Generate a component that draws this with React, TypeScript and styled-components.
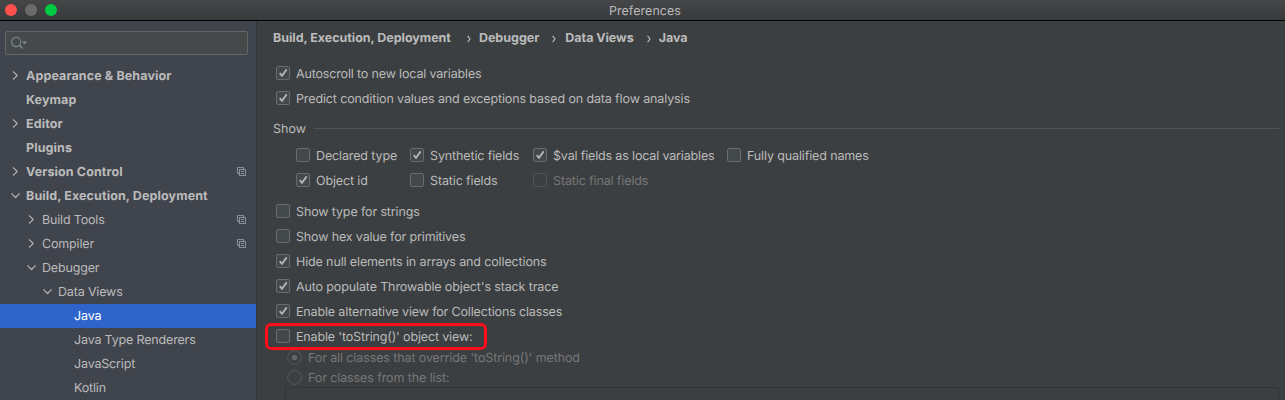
import React from "react";
import styled, { createGlobalStyle, css } from "styled-components";

const GlobalStyle = createGlobalStyle`
  * { box-sizing: border-box; }
  body {
    margin: 0;
    background: #3c3f41;
    overflow: hidden;
  }
`;

const Window = styled.div`
  display: flex;
  flex-direction: column;
  width: 1285px;
  height: 400px;
  overflow: hidden;
  background: #3c3f41;
  color: #bbbbbb;
  font-family: Inter, "Liberation Sans", sans-serif;
  font-size: 12.5px;
  line-height: 16px;
  white-space: nowrap;
  text-rendering: geometricPrecision;
`;

const TitleBar = styled.header`
  display: grid;
  grid-template-columns: 1fr auto 1fr;
  align-items: center;
  flex: none;
  height: 21px;
  padding-left: 5px;
  background: linear-gradient(#454647, #393a3b);
  border-bottom: 1px solid #000;
`;

const Lights = styled.div`
  display: flex;
  gap: 8px;
`;

const Light = styled.i<{ $color: string }>`
  width: 12px;
  height: 12px;
  border-radius: 50%;
  background: ${(p) => p.$color};
`;

const Label = styled.span<{ $track?: number; $bold?: boolean }>`
  padding-top: 2px;
  letter-spacing: ${(p) => p.$track ?? 0}px;
  font-weight: ${(p) => (p.$bold ? 700 : 400)};
`;

const TitleText = styled(Label)`
  padding-top: 3px;
`;

const OptionLabel = styled(Label)`
  padding-top: 4px;
`;

const Body = styled.div`
  display: flex;
  flex: 1;
  min-height: 0;
`;

const Sidebar = styled.nav`
  flex: none;
  width: 257px;
  padding-top: 10px;
  background: #40444d;
  border-right: 1px solid #323435;
`;

const Search = styled.div`
  display: flex;
  align-items: center;
  width: 243px;
  height: 24px;
  margin: 0 0 9px 5px;
  padding-left: 5px;
  background: #45494a;
  border: 1px solid #646564;
  border-radius: 2px;
`;

const TreeRow = styled.div<{ $level: number; $selected?: boolean }>`
  display: flex;
  align-items: center;
  height: 24px;
  padding: 0 9px 0 ${(p) => 9 + p.$level * 16}px;
  ${(p) =>
    p.$selected &&
    css`
      background: #2f65ca;
      color: #fff;
    `}
`;

const ArrowSlot = styled.span`
  display: flex;
  width: 17px;
`;

const Trailing = styled.span`
  display: flex;
  margin-left: auto;
`;

const Main = styled.main`
  flex: 1;
  min-width: 0;
  padding: 9px 6px 0 16px;
`;

const Crumbs = styled.div`
  display: flex;
  align-items: center;
  height: 16px;
  margin-bottom: 15px;
`;

const CrumbArrow = styled.svg<{ $left: number; $right: number }>`
  margin: 1px ${(p) => p.$right}px 0 ${(p) => p.$left}px;
`;

const Options = styled.div`
  display: flex;
  flex-direction: column;
  padding-left: 3px;
`;

const CheckRow = styled.label<{ $disabled?: boolean }>`
  display: flex;
  align-items: center;
  gap: 6px;
  height: 25px;
  padding-bottom: 1px;
  color: ${(p) => (p.$disabled ? "#777777" : "#bbbbbb")};
`;

const Box = styled.span<{ $disabled?: boolean }>`
  display: flex;
  flex: none;
  width: 14px;
  height: 14px;
  border: 1px solid ${(p) => (p.$disabled ? "#545556" : "#6b6b6b")};
  border-radius: 2px;
  background: ${(p) => (p.$disabled ? "#3c3f41" : "#43494a")};
`;

const GroupTitle = styled.div`
  display: flex;
  align-items: center;
  height: 16px;
  margin: 9px 0 7px;
`;

const Rule = styled.span`
  width: 965px;
  height: 1px;
  margin-left: auto;
  background: #515253;
`;

const FieldGrid = styled.div`
  display: grid;
  grid-template-columns: 114px 123px 194px auto;
  padding: 0 0 6px 23px;
`;

const Highlight = styled.div`
  display: flex;
  align-items: center;
  width: 222px;
  height: 27px;
  margin: -1px 0 -2px -11px;
  padding-left: 8px;
  border: 3px solid #fc0d1b;
  border-radius: 6px;
`;

const RadioRow = styled.label`
  display: flex;
  align-items: center;
  gap: 6px;
  height: 20px;
  padding: 0 0 2px 11px;
  color: #777777;
`;

const RadioMark = styled.svg`
  flex: none;
  margin-top: 1px;
`;

const ListBox = styled.div`
  height: 30px;
  margin: -1px 0 0 12px;
  border: 1px solid #323435;
`;

type CheckProps = { text: string; on?: boolean; disabled?: boolean; track?: number };

const Check = ({ text, on, disabled, track = -0.13 }: CheckProps) => (
  <CheckRow $disabled={disabled}>
    <Box $disabled={disabled}>
      {on && (
        <svg width="12" height="12" viewBox="0 0 12 12" fill="none">
          <path d="M2.7 6.2 L5 8.8 L9.7 2.4" stroke="#b4b7b8" strokeWidth="1.8" />
        </svg>
      )}
    </Box>
    <OptionLabel $track={track}>{text}</OptionLabel>
  </CheckRow>
);

const Radio = ({ text, on, track = -0.11 }: { text: string; on?: boolean; track?: number }) => (
  <RadioRow>
    <RadioMark width="15" height="15" viewBox="0 0 15 15">
      <circle cx="7.5" cy="7.5" r="6.9" fill="none" stroke="#575859" />
      {on && <circle cx="7.5" cy="7.5" r="2.6" fill="#666868" />}
    </RadioMark>
    <OptionLabel $track={track}>{text}</OptionLabel>
  </RadioRow>
);

const Arrow = ({ open }: { open?: boolean }) => (
  <svg width="12" height="12" viewBox="0 0 12 12" fill="none" stroke="#adafb2" strokeWidth="1.3">
    <path d={open ? "M2.4 3.4 L6.5 7.5 L10.6 3.4" : "M4 1.4 L8.2 5.5 L4 9.6"} />
  </svg>
);

const CopyIcon = () => (
  <svg width="10" height="10" viewBox="0 0 10 10" fill="none" stroke="#87939a">
    <path d="M2.5 6.5 H0.5 V0.5 H6.5 V2" />
    <rect x="2.5" y="2.5" width="6" height="6" />
    <path d="M4 4.5 H7 M4 6.5 H7" />
  </svg>
);

const SearchIcon = () => (
  <svg width="17" height="14" viewBox="0 0 17 14" fill="none">
    <circle cx="5.2" cy="6" r="4.6" stroke="#7b8a93" strokeWidth="1.1" />
    <path d="M8.3 9.2 L11.6 12.4" stroke="#7b8a93" strokeWidth="1.4" />
    <path d="M11 5.6 H16 L13.5 8.4 Z" fill="#7b8a93" />
  </svg>
);

type Node = {
  text: string;
  level: number;
  state?: "open" | "closed";
  bold?: boolean;
  copy?: boolean;
  selected?: boolean;
};

const tree: Node[] = [
  { text: "Appearance & Behavior", level: 0, state: "closed", bold: true },
  { text: "Keymap", level: 0, bold: true },
  { text: "Editor", level: 0, state: "closed", bold: true },
  { text: "Plugins", level: 0, bold: true },
  { text: "Version Control", level: 0, state: "closed", bold: true, copy: true },
  { text: "Build, Execution, Deployment", level: 0, state: "open", bold: true },
  { text: "Build Tools", level: 1, state: "closed", copy: true },
  { text: "Compiler", level: 1, state: "closed", copy: true },
  { text: "Debugger", level: 1, state: "open" },
  { text: "Data Views", level: 2, state: "open" },
  { text: "Java", level: 3, selected: true },
  { text: "Java Type Renderers", level: 3 },
  { text: "JavaScript", level: 3 },
  { text: "Kotlin", level: 3 },
];

const Separator = ({ left, right }: { left: number; right: number }) => (
  <CrumbArrow $left={left} $right={right} width="4" height="8" viewBox="0 0 4 8" fill="none" stroke="#bbbbbb" strokeWidth="1.1">
    <path d="M0.6 0.8 L3 4 L0.6 7.2" />
  </CrumbArrow>
);

export default function App() {
  return (
    <Window>
      <GlobalStyle />
      <TitleBar>
        <Lights>
          <Light $color="#ff514e" />
          <Light $color="#6a6b6b" />
          <Light $color="#00cb45" />
        </Lights>
        <TitleText $track={0.05}>Preferences</TitleText>
      </TitleBar>
      <Body>
        <Sidebar>
          <Search>
            <SearchIcon />
          </Search>
          {tree.map((n) => (
            <TreeRow key={n.text} $level={n.level} $selected={n.selected}>
              <ArrowSlot>{n.state && <Arrow open={n.state === "open"} />}</ArrowSlot>
              <Label $bold={n.bold} $track={n.bold ? 0.11 : -0.17}>{n.text}</Label>
              {n.copy && (
                <Trailing>
                  <CopyIcon />
                </Trailing>
              )}
            </TreeRow>
          ))}
        </Sidebar>
        <Main>
          <Crumbs>
            <Label $bold $track={-0.03}>Build, Execution, Deployment</Label>
            <Separator left={16} right={8} />
            <Label $bold>Debugger</Label>
            <Separator left={13} right={9} />
            <Label $bold $track={-0.05}>Data Views</Label>
            <Separator left={13} right={8} />
            <Label $bold>Java</Label>
          </Crumbs>
          <Options>
            <Check text="Autoscroll to new local variables" on track={-0.16} />
            <Check text="Predict condition values and exceptions based on data flow analysis" on />
          </Options>
          <GroupTitle>
            <OptionLabel>Show</OptionLabel>
            <Rule />
          </GroupTitle>
          <FieldGrid>
            <Check text="Declared type" />
            <Check text="Synthetic fields" on />
            <Check text="$val fields as local variables" on track={-0.16} />
            <Check text="Fully qualified names" />
            <Check text="Object id" on />
            <Check text="Static fields" />
            <Check text="Static final fields" disabled />
          </FieldGrid>
          <Options>
            <Check text="Show type for strings" />
            <Check text="Show hex value for primitives" track={-0.15} />
            <Check text="Hide null elements in arrays and collections" on />
            <Check text="Auto populate Throwable object's stack trace" on />
            <Check text="Enable alternative view for Collections classes" on track={-0.15} />
            <Highlight>
              <Check text="Enable 'toString()' object view:" track={-0.15} />
            </Highlight>
            <Radio text="For all classes that override 'toString()' method" on />
            <Radio text="For classes from the list:" track={-0.1} />
          </Options>
          <ListBox />
        </Main>
      </Body>
    </Window>
  );
}
